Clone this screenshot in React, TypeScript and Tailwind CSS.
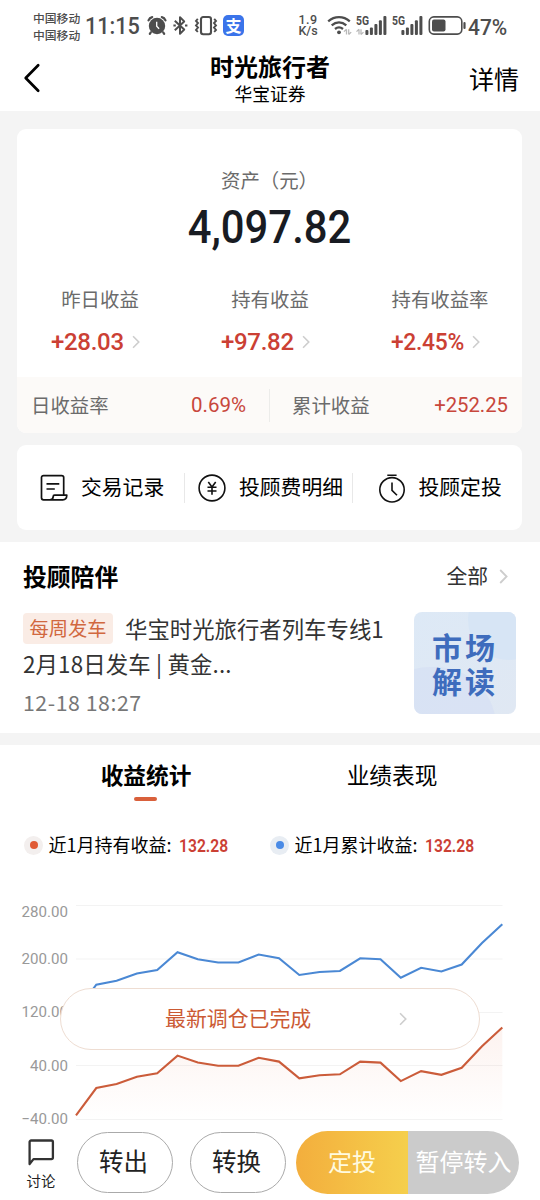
import React from "react";

const cumulative = [
  1012, 984.7, 980.8, 973.5, 970, 952.3, 959.3, 962.5, 962.5, 954.5, 958.3,
  975, 972, 971, 958.3, 959.3, 977.8, 967.8, 971.5, 964.5, 943, 924.3,
];

const toPoints = (shift: number) =>
  cumulative
    .map((y, i) => `${(76 + i * 20.3).toFixed(1)},${(y + shift - 890).toFixed(1)}`)
    .join(" ");

const holding = toPoints(103.3);

const axis = [
  { label: "280.00", line: 15.5, text: 27 },
  { label: "200.00", line: 69, text: 73.5 },
  { label: "120.00", line: 122.5, text: 127 },
  { label: "40.00", line: 175.5, text: 180.5 },
  { label: "−40.00", line: 229.5, text: 234 },
];

const earnings = [
  { label: "昨日收益", value: "+28.03", scale: "scale-x-[1]" },
  { label: "持有收益", value: "+97.82", scale: "scale-x-[1]" },
  { label: "持有收益率", value: "+2.45%", scale: "scale-x-[0.95]" },
];

const Chevron = ({ className }: { className?: string }) => (
  <svg viewBox="0 0 9 15" className={className} fill="none" stroke="#cdcdcd" strokeWidth="1.8">
    <path d="M1.2 1 7.6 7.5 1.2 14" />
  </svg>
);

const Signal = ({ data }: { data?: boolean }) => (
  <svg width="32" height="21" viewBox="0 0 32 21" fill="#4d4d4d">
    <text x="0" y="10" fontSize="12" fontWeight="700" textLength="13" lengthAdjust="spacingAndGlyphs" fontFamily="Roboto, sans-serif">
      5G
    </text>
    <rect x="9.4" y="15" width="3" height="5" rx="1" />
    <rect x="13.9" y="12.5" width="3" height="7.5" rx="1" />
    <rect x="18.4" y="9" width="3" height="11" rx="1" />
    <rect x="22.9" y="5.3" width="3" height="14.7" rx="1" />
    <rect x="27.4" y="1" width="3" height="19" rx="1" />
    {data && (
      <path d="M3 14.2v5.3M.5 16.6 3 14.2M5 14.2v5.3M5 19.5l2.5-2.4" stroke="#b9b9b9" strokeWidth="1.3" fill="none" />
    )}
  </svg>
);

const StatusBar = () => (
  <div className="flex h-[50px] items-start pt-[10px] text-[#4d4d4d]">
    <div className="ml-[33px] w-[50px] text-[11.8px] font-medium leading-[16.5px]">
      <p>中国移动</p>
      <p>中国移动</p>
    </div>
    <p className="mt-px ml-[2px] w-[61px] origin-left scale-x-[0.94] whitespace-nowrap font-[Roboto] text-[23px] font-medium leading-[32px]">
      11:15
    </p>
    {/* alarm */}
    <svg className="mt-[5px] ml-[1px]" width="20" height="21" viewBox="0 0 20 21">
      <circle cx="10" cy="11" r="8.2" fill="#4d4d4d" />
      <path d="M1.5 5.4C2.2 3.6 3.4 2.5 5.2 2.1M18.5 5.4C17.8 3.6 16.6 2.5 14.8 2.1M3.8 17.4l-1 1.5M16.2 17.4l1 1.5" stroke="#4d4d4d" strokeWidth="2.2" strokeLinecap="round" fill="none" />
      <path d="M9.7 6.8v4.4l2.4 2.6" stroke="#fff" strokeWidth="1.3" fill="none" />
    </svg>
    {/* bluetooth */}
    <svg className="mt-[5px] ml-[6px]" width="15" height="21" viewBox="0 0 15 21" fill="none" stroke="#4d4d4d" strokeWidth="2" strokeLinejoin="round">
      <path d="m1.8 5.8 9.4 8.8-4.200 4.200V2.200l4.200 4.200-9.400 8.800" />
      <path d="M.4 10.500h2.400M12 10.500h2.400" />
    </svg>
    {/* vibrate */}
    <svg className="mt-[5px] ml-[6px]" width="24" height="21" viewBox="0 0 24 21" fill="none" stroke="#4d4d4d">
      <rect x="7" y="2" width="10" height="17.2" rx="2.2" strokeWidth="2.1" />
      <path d="M3.8 3.8 2 5.9l2 2.2-2 2.3 2 2.2-2 2.3L3.8 17M20.2 3.8 22 5.9l-2 2.2 2 2.3-2 2.2 2 2.3-1.8 2.1" strokeWidth="1.9" />
    </svg>
    <div className="mt-[5px] ml-[5px] flex h-[21px] w-[21px] items-center justify-center rounded-[5px] bg-[#3b74ea] pb-px text-[16px] font-bold leading-none text-white">
      支
    </div>
    <div className="mt-[5px] ml-[52px] w-[24px] text-center font-[Roboto] text-[12.5px] font-medium leading-[10.5px]">
      <p className="tracking-[0.5px]">1.9</p>
      <p>K/s</p>
    </div>
    {/* wifi */}
    <svg className="mt-[5px] ml-[7px]" width="26" height="21" viewBox="0 0 26 21" fill="none" stroke="#4d4d4d" strokeWidth="2.3">
      <path d="M1.2 6.3c6.4-5.6 15.2-5.6 21.6 0M4.7 10.3c4.4-3.8 10.2-3.8 14.6 0M8 14c2.4-2 5.6-2 8 0" />
      <circle cx="12" cy="17.3" r="1.9" fill="#4d4d4d" stroke="none" />
      <path d="M19.5 14.2v5.3M17 16.6l2.5-2.4M21.7 14.2v5.3M21.7 19.5l2.5-2.4" stroke="#b9b9b9" strokeWidth="1.3" />
    </svg>
    <div className="mt-[5px] ml-[3px] flex gap-[4px]">
      <Signal data />
      <Signal />
    </div>
    {/* battery */}
    <svg className="mt-[5px] ml-[4px]" width="39" height="21" viewBox="0 0 39 21">
      <rect x="1.3" y="1.9" width="32.5" height="17.2" rx="4.5" fill="none" stroke="#4d4d4d" strokeWidth="1.6" />
      <rect x="4" y="4.5" width="13.5" height="12" rx="2" fill="#4d4d4d" />
      <path d="M36.5 8v5" stroke="#4d4d4d" strokeWidth="2.2" strokeLinecap="round" />
    </svg>
    <p className="mt-px ml-px origin-left scale-x-[0.93] whitespace-nowrap font-[Roboto] text-[22.5px] font-medium leading-[32px]">
      47%
    </p>
  </div>
);

const Header = () => (
  <header className="flex h-[61px] items-start">
    <svg className="mt-[13px] ml-[22px]" width="20" height="30" viewBox="0 0 20 30" fill="none" stroke="#000" strokeWidth="2.7" strokeLinecap="round" strokeLinejoin="round">
      <path d="M16.2 2.3 3.7 15l12.5 12.8" />
    </svg>
    <div className="ml-[108px] w-[240px] text-center text-black">
      <h1 className="mt-px text-[24px] font-bold leading-[30px]">时光旅行者</h1>
      <p className="text-[17.8px] leading-[25px]">华宝证券</p>
    </div>
    <button className="mt-[11px] ml-[79px] text-[25px] leading-[34px] text-black">详情</button>
  </header>
);

const AssetCard = () => (
  <section className="h-[304px] overflow-hidden rounded-[9px] bg-white">
    <div className="h-[248px] pt-[37px] text-center">
      <p className="text-[19.4px] leading-[28px] text-[#6b6b6b]">资产（元）</p>
      <p className="mt-px scale-x-[0.89] font-[Roboto] text-[47px] font-medium leading-[64px] text-[#181b22]">
        4,097.82
      </p>
      <div className="-mx-[2px] mt-[26px] flex">
        {earnings.map((item) => (
          <div key={item.label} className="w-[170px] shrink-0">
            <p className="text-[19.4px] leading-[28px] text-[#6b6b6b]">{item.label}</p>
            <div className="mt-[14px] ml-[36px] flex h-[30px] items-center">
              <span className="w-[81px] text-left font-[Roboto] text-[24px] font-medium tracking-[-0.3px] text-[#cb4034]">
                <span className={`inline-block origin-left ${item.scale}`}>{item.value}</span>
              </span>
              <Chevron className="h-[14px] w-[8px]" />
            </div>
          </div>
        ))}
      </div>
    </div>
    <div className="flex h-[56px] items-center bg-[#fcfaf8] text-[19.4px] text-[#6b6b6b]">
      <div className="flex w-[252px] items-center justify-between pr-[23px] pl-[14px]">
        <span>日收益率</span>
        <span className="mt-px font-[Roboto] text-[20.5px] text-[#c8473c]">0.69%</span>
      </div>
      <div className="h-[33px] w-px bg-[#ececea]" />
      <div className="flex flex-1 items-center justify-between pr-[14px] pl-[22px]">
        <span>累计收益</span>
        <span className="mt-px font-[Roboto] text-[20.3px] text-[#c8473c]">+252.25</span>
      </div>
    </div>
  </section>
);

const Shortcuts = () => (
  <section className="mt-[12px] flex h-[85px] items-center rounded-[9px] bg-white text-[20.8px] text-black">
    <div className="flex w-[167px] items-center pl-[23px]">
      <svg width="28" height="28" viewBox="0 0 28 28" fill="none" stroke="#111" strokeWidth="1.7" strokeLinejoin="round">
        <path d="M23.7 20.3V3.6a2 2 0 0 0-2-2H3.5a2 2 0 0 0-2 2v20.2a2 2 0 0 0 2 2h19.3c2.8 0 3.9-1.6 4-4.6H14.5c-.8 0-1.3.5-1.3 1.3 0 2-1.2 3.3-3.2 3.3" />
        <path d="M6.5 9.8h12.8M6.5 15h8.3" />
      </svg>
      <span className="-mt-px ml-[13px]">交易记录</span>
    </div>
    <div className="h-[30px] w-px bg-[#e8e8e8]" />
    <div className="flex w-[167px] items-center pl-[13px]">
      <svg width="28" height="28" viewBox="0 0 28 28" fill="none" stroke="#111" strokeWidth="1.6">
        <circle cx="14" cy="14" r="12.9" />
        <path d="m10.3 8 3.7 5 3.7-5M14 13v7.7M9.5 13.3h9M9.5 17h9" />
      </svg>
      <span className="-mt-px ml-[13px] whitespace-nowrap">投顾费明细</span>
    </div>
    <div className="h-[30px] w-px bg-[#e8e8e8]" />
    <div className="flex flex-1 items-center pl-[24px]">
      <svg width="30" height="30" viewBox="0 0 30 30" fill="none" stroke="#111" strokeWidth="1.6">
        <circle cx="15" cy="16.8" r="12.2" />
        <path d="M10.3 2.2h9.3M15 9.5v7.8l5 5" />
      </svg>
      <span className="-mt-px ml-[11.5px]">投顾定投</span>
    </div>
  </section>
);

const Companion = () => (
  <section className="flex h-[191px] flex-col bg-white">
    <div className="flex h-[68px] items-center pr-[32px] pl-[23px]">
      <h2 className="flex-1 text-[23.8px] font-bold text-black">投顾陪伴</h2>
      <span className="text-[20.8px] text-[#333]">全部</span>
      <Chevron className="ml-[11px] h-[15px] w-[9px]" />
    </div>
    <div className="flex pl-[23px]">
      <div className="w-[391px]">
        <div className="text-[22.4px] leading-[36px] text-[#333]">
          <div className="flex items-center whitespace-nowrap">
            <span className="mt-px flex h-[31px] w-[90px] items-center justify-center rounded-[4px] bg-[#faece5] pb-px text-[19.3px] text-[#d1683f]">
              每周发车
            </span>
            <span className="ml-[12px]">华宝时光旅行者列车专线1</span>
          </div>
          <p className="-mt-px tracking-[0.15px]">2月18日发车 | 黄金...</p>
        </div>
        <p className="mt-[5px] text-[21.3px] leading-[32px] tracking-[0.55px] text-[#777]">12-18 18:27</p>
      </div>
      <div className="relative mt-[2px] flex h-[102px] w-[102px] flex-col items-center justify-center overflow-hidden rounded-[8px] bg-gradient-to-br from-[#dde9f6] to-[#e0e8f3] text-[30px] font-bold leading-[34px] tracking-[3px] text-[#3e6cbd]">
        <div className="absolute -top-[32px] left-[54px] h-[80px] w-[80px] rounded-full bg-[#d7e5f5]" />
        <div className="absolute top-[55px] -left-[44px] h-[120px] w-[126px] rounded-full bg-[#d5e0f3]/70" />
        <p className="relative">市场</p>
        <p className="relative">解读</p>
      </div>
    </div>
  </section>
);

const Legend = ({ name, dot, ring }: { name: string; dot: string; ring: string }) => (
  <div className="flex w-[246px] items-center">
    <span className={`flex h-[19px] w-[19px] items-center justify-center rounded-full ${ring}`}>
      <span className={`h-[8px] w-[8px] rounded-full ${dot}`} />
    </span>
    <span className="-mt-px ml-[5.5px] w-[130px] whitespace-nowrap text-[18px] text-black">{name}:</span>
    <span className="origin-left scale-x-[0.87] font-[Roboto] text-[18px] font-semibold text-[#cb4034]">132.28</span>
  </div>
);

const Statistics = () => (
  <section className="mt-[12px] bg-white">
    <div className="flex h-[62px] px-[23px] text-[22.7px] text-black">
      <div className="flex w-[246px] flex-col items-center">
        <span className="mt-[13px] font-bold leading-[34px]">收益统计</span>
        <span className="mt-[5px] mr-px h-[4px] w-[23px] rounded-full bg-[#d9603b]" />
      </div>
      <div className="flex w-[246px] flex-col items-center">
        <span className="mt-[13px] leading-[34px]">业绩表现</span>
      </div>
    </div>
    <div className="flex h-[76px] items-center pl-[24px]">
      <Legend name="近1月持有收益" dot="bg-[#e05a34]" ring="bg-[#f3efee]" />
      <Legend name="近1月累计收益" dot="bg-[#4a8be6]" ring="bg-[#e8edf3]" />
    </div>
    <div className="relative mt-[7px]">
      <svg width="540" height="237" viewBox="0 0 540 237">
        <defs>
          <linearGradient id="fill" x1="0" y1="0" x2="0" y2="1">
            <stop offset="0" stopColor="#e0643e" stopOpacity="0.08" />
            <stop offset="1" stopColor="#e0643e" stopOpacity="0" />
          </linearGradient>
        </defs>
        {axis.map((tick) => (
          <g key={tick.label}>
            <path d={`M76 ${tick.line}H502.5`} stroke="#f3f3f3" />
            <text x="68" y={tick.text} textAnchor="end" fontFamily="Roboto, sans-serif" fontSize="15.1" fill="#999">
              {tick.label}
            </text>
          </g>
        ))}
        <polygon points={`76,229 ${holding} 502.3,229`} fill="url(#fill)" />
        <polyline points={toPoints(0)} fill="none" stroke="#4a88d4" strokeWidth="2.1" />
        <polyline points={holding} fill="none" stroke="#cb5c3a" strokeWidth="2.1" />
      </svg>
      <div className="absolute top-[98px] left-[60px] flex h-[62px] w-[420px] items-center rounded-full border border-[#eeddd2] bg-white pl-[104px]">
        <span className="-mt-[2px] text-[20.9px] text-[#cb5a34]">最新调仓已完成</span>
        <Chevron className="ml-[88px] h-[14px] w-[8px]" />
      </div>
    </div>
  </section>
);

const BottomBar = () => (
  <footer className="flex h-[73px] items-start bg-white pt-[4px] text-[24.5px] text-[#222]">
    <div className="mt-[8px] ml-[21px] flex w-[40px] flex-col items-center">
      <svg width="28" height="27" viewBox="0 0 28 27" fill="none" stroke="#333" strokeWidth="2.3" strokeLinejoin="round">
        <path d="M2.6 25V3a1.5 1.5 0 0 1 1.5-1.5h20.3A1.5 1.5 0 0 1 25.9 3v15.6a1.5 1.5 0 0 1-1.5 1.5H6.5Z" />
      </svg>
      <span className="mt-[4px] text-[14.4px] leading-[22px]">讨论</span>
    </div>
    <button className="mt-px ml-[16px] h-[61px] w-[96px] rounded-full border border-[#aaa] pr-[3px] pb-[3px]">转出</button>
    <button className="mt-px ml-[17px] h-[61px] w-[96px] rounded-full border border-[#aaa] pr-[3px] pb-[3px]">转换</button>
    <div className="ml-[10px] flex h-[63px] w-[223px] overflow-hidden rounded-full text-[24px] text-white">
      <button className="w-[112px] bg-gradient-to-r from-[#f3ae3d] to-[#f5cf4c] pb-[3px] text-[#fffbe0]">定投</button>
      <button className="flex-1 whitespace-nowrap bg-[#cbcbcb] pb-[3px]">暂停转入</button>
    </div>
  </footer>
);

export default function App() {
  return (
    <main className="h-[1200px] w-[540px] overflow-hidden bg-[#f4f4f4] font-['Noto_Sans_CJK_SC',sans-serif]">
      <div className="bg-white">
        <StatusBar />
        <Header />
      </div>
      <div className="pt-[18px] pr-[18px] pb-[12px] pl-[17px]">
        <AssetCard />
        <Shortcuts />
      </div>
      <Companion />
      <Statistics />
      <BottomBar />
    </main>
  );
}
